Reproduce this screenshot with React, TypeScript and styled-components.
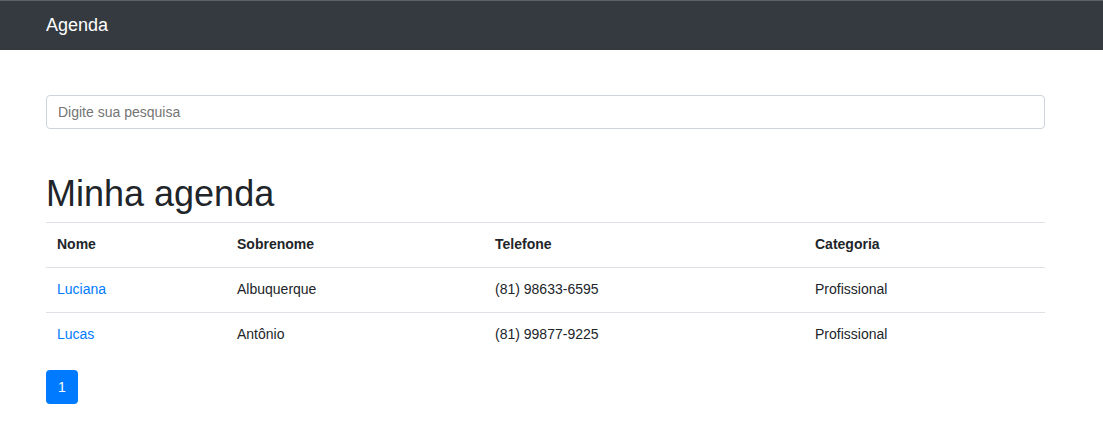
import styled, { createGlobalStyle } from 'styled-components'

interface Contact {
	nome: string
	sobrenome: string
	telefone: string
	categoria: string
}

const contacts: Contact[] = [
	{ nome: 'Luciana', sobrenome: 'Albuquerque', telefone: '(81) 98633-6595', categoria: 'Profissional' },
	{ nome: 'Lucas', sobrenome: 'Antônio', telefone: '(81) 99877-9225', categoria: 'Profissional' },
]

const columns = [
	{ label: 'Nome', width: 180 },
	{ label: 'Sobrenome', width: 258 },
	{ label: 'Telefone', width: 320 },
	{ label: 'Categoria', width: 241 },
]

const GlobalStyle = createGlobalStyle`
	body {
		margin: 0;
		font-family: "Liberation Sans", Arial, sans-serif;
		font-size: 14px;
		line-height: 20px;
		color: #212529;
		background: #fff;
	}
`

const Navbar = styled.nav`
	height: 50px;
	box-sizing: border-box;
	border-top: 1px solid #5c6166;
	background: #343a40;
	display: flex;
	align-items: center;
	padding-left: 46px;
	padding-bottom: 1px;
`

const Brand = styled.a`
	color: #fff;
	font-size: 18px;
	line-height: 20px;
	text-decoration: none;
`

const Container = styled.main`
	width: 999px;
	margin-left: 46px;
	padding-top: 45px;
`

const Search = styled.input`
	display: block;
	width: 100%;
	height: 34px;
	box-sizing: border-box;
	padding: 6px 11px;
	font-family: inherit;
	font-size: 14px;
	line-height: 20px;
	color: #495057;
	border: 1px solid #ced4da;
	border-radius: 4px;
	outline: none;
	::placeholder {
		color: #6c757d;
	}
`

const Title = styled.h1`
	margin: 45px 0 8px;
	font-size: 36px;
	font-weight: 500;
	line-height: 40px;
`

const Table = styled.table`
	width: 100%;
	border-collapse: collapse;
	table-layout: fixed;
`

const Th = styled.th`
	text-align: left;
	font-weight: bold;
	padding: 11px 11px 13px;
	border-top: 1px solid #dee2e6;
`

const Td = styled.td`
	padding: 11px 11px 13px;
	border-top: 1px solid #dee2e6;
`

const NameLink = styled.a`
	color: #007bff;
	text-decoration: none;
`

const Pagination = styled.ul`
	display: flex;
	list-style: none;
	margin: 13px 0 0;
	padding: 0;
`

const PageButton = styled.a<{ $active?: boolean }>`
	display: block;
	padding: 7px 12px;
	line-height: 20px;
	border-radius: 4px;
	color: ${(p) => (p.$active ? '#fff' : '#007bff')};
	background: ${(p) => (p.$active ? '#007bff' : '#fff')};
	text-decoration: none;
`

const App = () => {
	return (
		<>
			<GlobalStyle />
			<Navbar>
				<Brand href="#">Agenda</Brand>
			</Navbar>
			<Container>
				<Search placeholder="Digite sua pesquisa" />
				<Title>Minha agenda</Title>
				<Table>
					<colgroup>
						{columns.map((c) => (
							<col key={c.label} style={{ width: c.width }} />
						))}
					</colgroup>
					<thead>
						<tr>
							{columns.map((c) => (
								<Th key={c.label}>{c.label}</Th>
							))}
						</tr>
					</thead>
					<tbody>
						{contacts.map((c) => (
							<tr key={c.telefone}>
								<Td>
									<NameLink href="#">{c.nome}</NameLink>
								</Td>
								<Td>{c.sobrenome}</Td>
								<Td>{c.telefone}</Td>
								<Td>{c.categoria}</Td>
							</tr>
						))}
					</tbody>
				</Table>
				<Pagination>
					<li>
						<PageButton href="#" $active>
							1
						</PageButton>
					</li>
				</Pagination>
			</Container>
		</>
	)
}

export default App
